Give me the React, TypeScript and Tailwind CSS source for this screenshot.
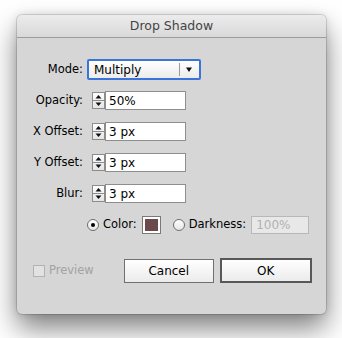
import React from "react"

const font = { fontFamily: '"DejaVu Sans", "Liberation Sans", sans-serif' }

function Stepper() {
  return (
    <svg width="13" height="17" viewBox="0 0 13 17" className="shrink-0">
      <defs>
        <linearGradient id="stp" x1="0" y1="0" x2="0" y2="1">
          <stop offset="0" stopColor="#ffffff" />
          <stop offset="1" stopColor="#e4e4e4" />
        </linearGradient>
      </defs>
      <rect x="0.5" y="0.5" width="12" height="16" fill="url(#stp)" stroke="#8c8c8c" />
      <line x1="1" y1="8.5" x2="12" y2="8.5" stroke="#8c8c8c" />
      <path d="M6.5 3 L9.5 6.5 L3.5 6.5 Z" fill="#111" />
      <path d="M3.5 10.5 L9.5 10.5 L6.5 14 Z" fill="#111" />
    </svg>
  )
}

function NumberField({ value }: { value: string }) {
  return (
    <div className="flex items-center ml-[5px]">
      <Stepper />
      <div className="h-[19px] w-[81px] bg-white border border-[#8e8e8e] flex items-center pl-[3px] text-[12px] text-black">
        {value}
      </div>
    </div>
  )
}

function Row({ label, children }: { label: string; children: React.ReactNode }) {
  return (
    <div className="h-[31px] flex items-center">
      <div className="w-[66px] text-right text-[11.5px] text-black">{label}</div>
      <div className="ml-[4px] flex items-center">{children}</div>
    </div>
  )
}

export default function App() {
  return (
    <div className="w-[342px] h-[338px] bg-white overflow-hidden pt-[15px] pl-[17px]" style={font}>
      <div className="w-[309px] h-[299px] bg-[#d6d6d6] rounded-[5px] shadow-[0_14px_28px_rgba(0,0,0,0.5),0_0_8px_rgba(0,0,0,0.12),0_0_0_1px_rgba(0,0,0,0.12)] flex flex-col overflow-hidden">
        {/* title bar */}
        <div className="h-[23px] shrink-0 bg-gradient-to-b from-[#ececec] to-[#d9d9d9] border-b border-[#9c9c9c] flex items-center justify-center text-[12.5px] text-[#444]">
          Drop Shadow
        </div>

        <div className="pt-[16px] flex flex-col">
          <Row label="Mode:">
            <div className="h-[21px] w-[114px] border-2 border-[#3b74d8] rounded-[2px] bg-gradient-to-b from-white to-[#ececec] flex items-center">
              <span className="flex-1 pl-[5px] text-[12px] text-black">Multiply</span>
              <div className="h-[13px] w-px bg-[#9a9a9a]" />
              <svg width="19" height="10" viewBox="0 0 19 10">
                <path d="M6 2.5 L12 2.5 L9 7 Z" fill="#111" />
              </svg>
            </div>
          </Row>
          <Row label="Opacity:">
            <NumberField value="50%" />
          </Row>
          <Row label="X Offset:">
            <NumberField value="3 px" />
          </Row>
          <Row label="Y Offset:">
            <NumberField value="3 px" />
          </Row>
          <Row label="Blur:">
            <NumberField value="3 px" />
          </Row>
          <div className="h-[31px] flex items-center pl-[70px] text-[11.5px] text-black">
            <div className="w-[12px] h-[12px] rounded-full border border-[#6f6f6f] bg-gradient-to-b from-white to-[#e6e6e6] flex items-center justify-center">
              <div className="w-[4px] h-[4px] rounded-full bg-black" />
            </div>
            <span className="ml-[4px]">Color:</span>
            <div className="ml-[5px] w-[19px] h-[18px] border border-[#7a7a7a] bg-white p-[2px]">
              <div className="w-full h-full bg-[#6a4a4a]" />
            </div>
            <div className="ml-[12px] w-[12px] h-[12px] rounded-full border border-[#6f6f6f] bg-gradient-to-b from-white to-[#e6e6e6]" />
            <span className="ml-[4px]">Darkness:</span>
            <div className="ml-[5px] h-[18px] w-[58px] border border-[#b8b8b8] bg-[#e8e8e8] flex items-center pl-[4px] text-[12px] text-[#b2b2b2]">
              100%
            </div>
          </div>

          <div className="mt-[18px] flex items-center">
            <div className="ml-[16px] w-[12px] h-[12px] border border-[#b2b2b2] bg-[#e2e2e2]" />
            <span className="ml-[4px] text-[11.5px] text-[#a3a3a3]">Preview</span>
            <button className="ml-[30px] w-[90px] h-[24px] border border-[#707070] bg-gradient-to-b from-white to-[#ebebeb] text-[12px] text-black">
              Cancel
            </button>
            <button className="ml-[6px] w-[92px] h-[25px] border-2 border-[#585858] bg-gradient-to-b from-white to-[#ebebeb] text-[12px] text-black">
              OK
            </button>
          </div>
        </div>
      </div>
    </div>
  )
}
